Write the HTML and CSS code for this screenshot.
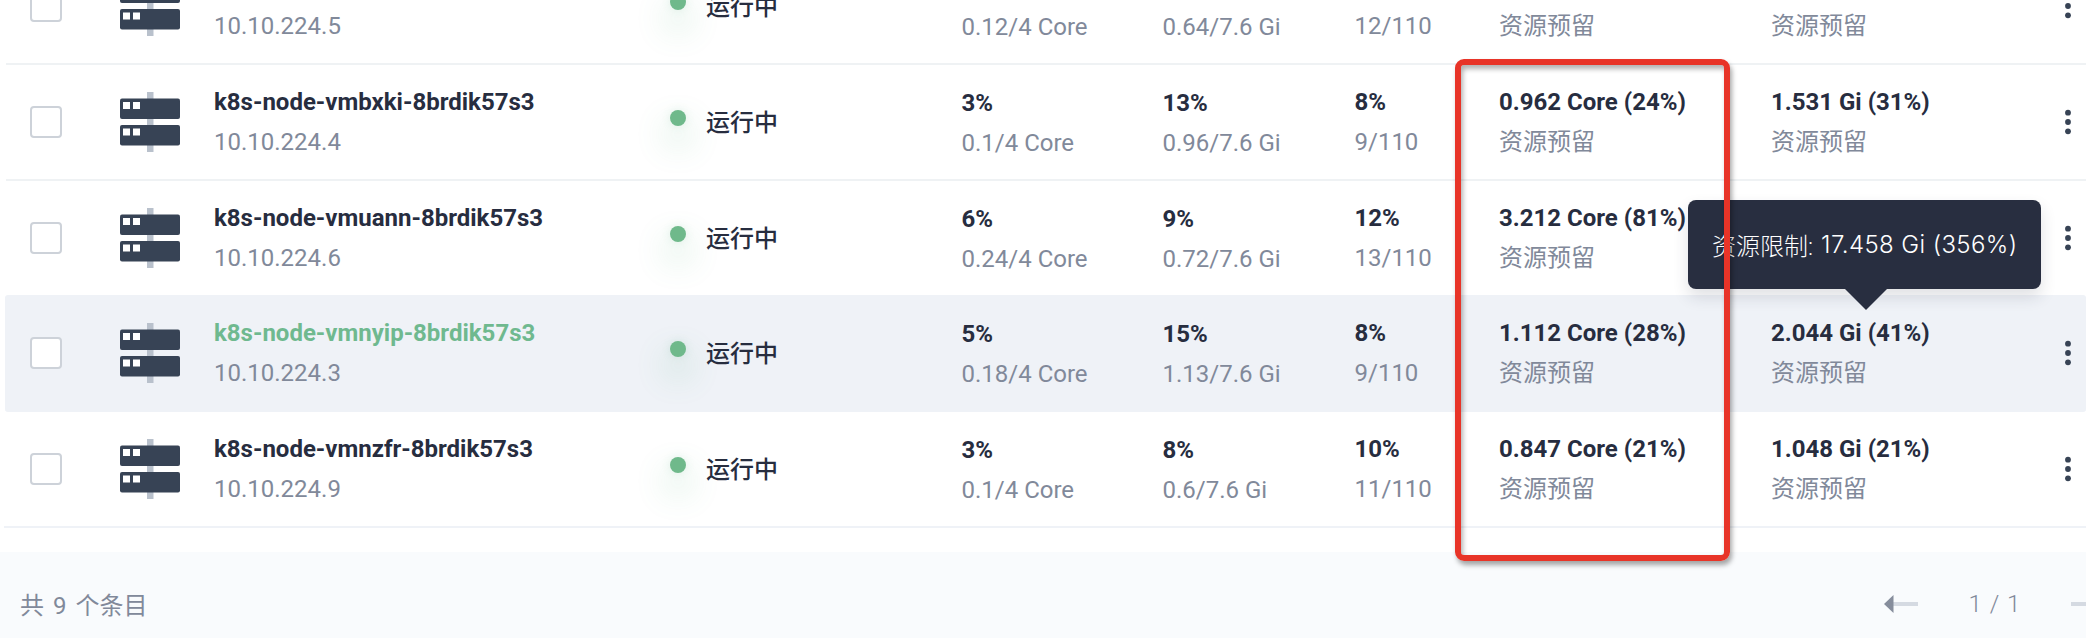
FILE: index.html
```html
<!DOCTYPE html>
<html lang="zh-CN">
<head>
<meta charset="utf-8">
<title>集群节点</title>
<link rel="stylesheet" href="styles.css">
</head>
<body>
<svg width="0" height="0" class="defs">
  <symbol id="node" viewBox="0 0 60 60">
    <path fill="#b9c1cc" d="M27 0h6.500v60H27z"/>
    <rect y="6.500" width="60" height="20.500" rx="2" fill="#374355"/>
    <rect y="33" width="60" height="20.500" rx="2" fill="#374355"/>
    <path d="M3 10h7v7H3zM13 10h7v7h-7zM3 36.500h7v7H3zM13 36.500h7v7h-7z"/>
  </symbol>
  <symbol id="more" viewBox="0 0 6 26">
    <circle cx="3" cy="3.700" r="2.900"/><circle cx="3" cy="13" r="2.900"/><circle cx="3" cy="22.300" r="2.900"/>
  </symbol>
</svg>
<main class="page">
  <section class="table">
    <div class="row">
      <span class="checkbox"></span>
      <svg class="icon"><use href="#node"/></svg>
      <div class="cell name"><b></b><span>10.10.224.5</span></div>
      <div class="status"><i class="dot"></i><span>运行中</span></div>
      <div class="cell usage"><b></b><span>0.12/4 Core</span></div>
      <div class="cell usage"><b></b><span>0.64/7.6 Gi</span></div>
      <div class="cell"><b></b><span>12/110</span></div>
      <div class="cell"><b></b><span class="zh">资源预留</span></div>
      <div class="cell"><b></b><span class="zh">资源预留</span></div>
      <svg class="more"><use href="#more"/></svg>
    </div>
    <div class="row">
      <span class="checkbox"></span>
      <svg class="icon"><use href="#node"/></svg>
      <div class="cell name"><b>k8s-node-vmbxki-8brdik57s3</b><span>10.10.224.4</span></div>
      <div class="status"><i class="dot"></i><span>运行中</span></div>
      <div class="cell usage"><b>3%</b><span>0.1/4 Core</span></div>
      <div class="cell usage"><b>13%</b><span>0.96/7.6 Gi</span></div>
      <div class="cell"><b>8%</b><span>9/110</span></div>
      <div class="cell"><b>0.962 Core (24%)</b><span class="zh">资源预留</span></div>
      <div class="cell"><b>1.531 Gi (31%)</b><span class="zh">资源预留</span></div>
      <svg class="more"><use href="#more"/></svg>
    </div>
    <div class="row before-active">
      <span class="checkbox"></span>
      <svg class="icon"><use href="#node"/></svg>
      <div class="cell name"><b>k8s-node-vmuann-8brdik57s3</b><span>10.10.224.6</span></div>
      <div class="status"><i class="dot"></i><span>运行中</span></div>
      <div class="cell usage"><b>6%</b><span>0.24/4 Core</span></div>
      <div class="cell usage"><b>9%</b><span>0.72/7.6 Gi</span></div>
      <div class="cell"><b>12%</b><span>13/110</span></div>
      <div class="cell"><b>3.212 Core (81%)</b><span class="zh">资源预留</span></div>
      <div class="cell"></div>
      <svg class="more"><use href="#more"/></svg>
    </div>
    <div class="row active">
      <span class="checkbox"></span>
      <svg class="icon"><use href="#node"/></svg>
      <div class="cell name"><b>k8s-node-vmnyip-8brdik57s3</b><span>10.10.224.3</span></div>
      <div class="status"><i class="dot"></i><span>运行中</span></div>
      <div class="cell usage"><b>5%</b><span>0.18/4 Core</span></div>
      <div class="cell usage"><b>15%</b><span>1.13/7.6 Gi</span></div>
      <div class="cell"><b>8%</b><span>9/110</span></div>
      <div class="cell"><b>1.112 Core (28%)</b><span class="zh">资源预留</span></div>
      <div class="cell"><b>2.044 Gi (41%)</b><span class="zh">资源预留</span></div>
      <svg class="more"><use href="#more"/></svg>
    </div>
    <div class="row last">
      <span class="checkbox"></span>
      <svg class="icon"><use href="#node"/></svg>
      <div class="cell name"><b>k8s-node-vmnzfr-8brdik57s3</b><span>10.10.224.9</span></div>
      <div class="status"><i class="dot"></i><span>运行中</span></div>
      <div class="cell usage"><b>3%</b><span>0.1/4 Core</span></div>
      <div class="cell usage"><b>8%</b><span>0.6/7.6 Gi</span></div>
      <div class="cell"><b>10%</b><span>11/110</span></div>
      <div class="cell"><b>0.847 Core (21%)</b><span class="zh">资源预留</span></div>
      <div class="cell"><b>1.048 Gi (21%)</b><span class="zh">资源预留</span></div>
      <svg class="more"><use href="#more"/></svg>
    </div>
  </section>
  <footer class="footer">
    <span class="total">共 9 个条目</span>
    <nav class="pager">
      <svg class="arrow" viewBox="0 0 34 18"><path fill="#d5dae2" d="M9 7h25v4H9z"/><path fill="#868d9c" d="M0 9 9.500 0v18z"/></svg>
      <span class="pages">1 / 1</span>
      <svg class="arrow" viewBox="0 0 34 18"><path fill="#d5dae2" d="M0 7h25v4H0z"/><path fill="#868d9c" d="M34 9 24.500 0v18z"/></svg>
    </nav>
  </footer>
  <div class="tooltip"><span>资源限制: </span><span class="amount">17.458 Gi (356%)</span></div>
  <div class="highlight"></div>
</main>
</body>
</html>
```
FILE: styles.css
```css
* { box-sizing: border-box; }
body {
  margin: 0;
  background: #fff;
  font-family: Roboto, "Noto Sans CJK SC", sans-serif;
  font-size: 24px;
  color: #272d3f;
}
.defs { position: absolute; }
.page {
  position: relative;
  display: flex;
  flex-direction: column;
  width: 2086px;
  height: 638px;
  overflow: hidden;
}
.table {
  display: flex;
  flex-direction: column;
  flex: none;
  height: 603px;
  margin-top: -51px;
}
.row {
  display: grid;
  grid-template-columns: 90px 94px 456px 291.5px 201px 192px 144.5px 272px 294px 6px;
  align-items: center;
  flex: none;
  height: 116px;
  margin-left: 6px;
  padding-left: 24px;
  border-bottom: 2px solid #eff2f4;
}
.before-active { height: 114px; border-bottom: 0; }
.active {
  height: 117px;
  margin-left: 5px;
  padding-left: 25px;
  border-bottom: 1px solid #eff2f7;
  border-radius: 3px;
  background: #eff2f7;
}
.last { margin-left: 4px; padding-left: 26px; border-color: #eff2f7; }
.checkbox {
  width: 32px;
  height: 32px;
  border: 2px solid #cdd2d9;
  border-radius: 4px;
  background: #fff;
}
.icon { display: block; width: 60px; height: 60px; fill: #fff; }
.cell { display: flex; flex-direction: column; white-space: nowrap; line-height: 40px; }
.cell b { height: 40px; font-weight: 700; }
.cell span { height: 40px; color: #81899a; }
.usage { padding-top: 2px; }
.active .name b { color: #6fb98f; }
.status { display: flex; align-items: center; gap: 20px; font-weight: 500; line-height: 36px; }
.status span { padding-top: 1px; }
.dot {
  width: 16px;
  height: 16px;
  margin-top: -8px;
  border-radius: 50%;
  background: #6fb98b;
  box-shadow: 0 16px 32px 4px rgba(85, 175, 120, .24), 0 0 8px 1px rgba(85, 175, 120, .12);
}
.more { display: block; width: 6px; height: 26px; fill: #374355; }
.footer {
  display: flex;
  flex: 1;
  align-items: center;
  justify-content: space-between;
  padding: 17px 0 0 20px;
  background: #f9fbfd;
  color: #81899a;
}
.total { word-spacing: 3px; }
.pager { display: flex; align-items: center; margin-right: -19px; }
.arrow { width: 34px; height: 18px; }
.pages { width: 153px; text-align: center; font-weight: 300; word-spacing: 2px; }
.tooltip {
  position: absolute;
  left: 1688px;
  top: 200px;
  display: flex;
  align-items: center;
  gap: 8px;
  width: 353px;
  height: 89px;
  padding-left: 24px;
  border-radius: 8px;
  background: #282e40;
  box-shadow: 0 8px 16px rgba(36, 46, 66, .14);
  color: #fff;
  font-weight: 300;
  white-space: nowrap;
}
.tooltip::after {
  content: "";
  position: absolute;
  left: 156px;
  top: 88px;
  border: 22px solid transparent;
  border-bottom: 0;
  border-top-color: #282e40;
}
.amount { font-family: Inter, sans-serif; letter-spacing: .4px; }
.highlight {
  position: absolute;
  left: 1455px;
  top: 59px;
  width: 275px;
  height: 502px;
  border: 6px solid #e83428;
  border-radius: 9px;
  box-shadow: 2px 4px 5px rgba(0, 0, 0, .35), inset 2px 4px 5px rgba(0, 0, 0, .3);
}
```
